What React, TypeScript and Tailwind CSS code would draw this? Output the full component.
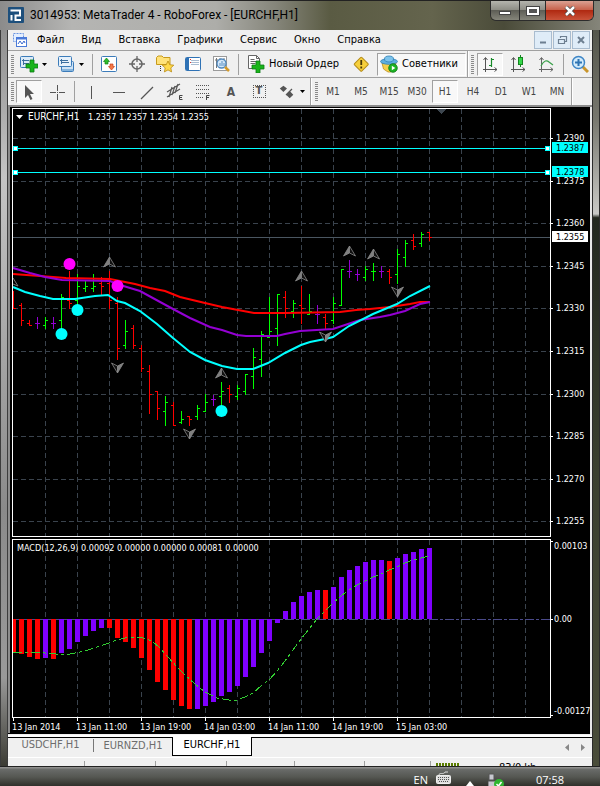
import { ReactNode } from "react";

// [high, low, open, close] in plot units, one bar every 8 units
const bars: [number, number, number, number, string][] = [
  [291, 309, 308, 308, "r"], [303, 326, 305, 320, "r"], [320, 326, 323, 325, "r"],
  [317, 329, 323, 323, "p"], [317, 329, 325, 320, "g"], [317, 329, 323, 323, "p"],
  [294, 329, 320, 297, "g"], [271, 309, 300, 303, "r"], [274, 305, 300, 286, "g"],
  [280, 292, 288, 286, "g"], [274, 292, 288, 286, "g"], [277, 295, 283, 286, "r"],
  [271, 309, 283, 300, "r"], [297, 360, 303, 348, "r"], [320, 349, 345, 331, "g"],
  [325, 349, 328, 345, "r"], [345, 372, 348, 368, "r"], [365, 414, 371, 394, "r"],
  [391, 420, 391, 408, "r"], [396, 426, 411, 402, "g"], [402, 426, 405, 425, "r"],
  [411, 424, 422, 419, "g"], [416, 426, 416, 419, "r"], [405, 420, 416, 408, "g"],
  [394, 412, 411, 402, "g"], [395, 406, 399, 399, "p"], [382, 406, 396, 391, "g"],
  [385, 403, 388, 394, "r"], [385, 400, 396, 388, "g"], [374, 395, 391, 374, "g"],
  [348, 389, 376, 357, "g"], [331, 377, 359, 334, "g"], [297, 338, 337, 331, "g"],
  [294, 346, 328, 294, "g"], [291, 318, 297, 308, "r"], [300, 318, 311, 303, "g"],
  [286, 324, 305, 308, "r"], [294, 315, 314, 311, "g"], [305, 324, 314, 314, "p"],
  [314, 329, 317, 323, "r"], [297, 324, 320, 303, "g"], [269, 306, 305, 269, "g"],
  [260, 278, 271, 271, "p"], [269, 281, 274, 274, "p"], [266, 281, 277, 269, "g"],
  [263, 281, 271, 271, "g"], [266, 278, 271, 271, "p"], [269, 284, 271, 277, "r"],
  [249, 284, 274, 254, "g"], [240, 267, 257, 243, "g"], [234, 250, 240, 246, "r"],
  [232, 247, 243, 234, "g"], [232, 241, 232, 237, "r"],
];

const barColors: Record<string, string> = { r: "#ff0000", g: "#00ff00", p: "#9400d3" };

const macd = [
  652, 654, 657, 659, 658, 659, 653, 649, 642, 636, 631, 628, 628, 638, 642, 648, 658, 670, 682,
  690, 700, 706, 709, 709, 706, 702, 696, 692, 686, 677, 667, 653, 641, 623, 611, 602, 596, 592,
  590, 590, 587, 577, 570, 566, 562, 560, 560, 561, 558, 554, 552, 549, 548,
];
const macdRed = [0, 1, 2, 3, 5, 12, 13, 14, 15, 16, 17, 18, 19, 20, 21, 22, 39, 47];

const redLine =
  "13,274 40,276 66,278 110,279 120,281 135,284 150,288 165,291 180,297 205,303 222,307 238,310 254,313 285,313 340,312 356,310 370,309 390,307 410,304 420,302 430,302";
const purpleLine =
  "13,268 30,273 45,277 62,280 110,281 117,284 130,288 140,291 173,309 190,318 210,327 222,330 237,335 246,336 277,336 285,334 300,331 333,329 345,325 360,320 380,317 390,315 405,311 420,304 430,302";
const cyanLine =
  "13,287 25,292 40,296 53,299 75,299 95,296 108,295 117,301 125,303 140,311 157,324 173,338 190,352 205,360 222,366 237,369 253,369 268,363 285,353 293,349 301,345 310,342 325,339 333,337 349,326 373,314 385,309 397,304 410,296 430,286";
const signalLine =
  "13,652 29,652 45,653 56,654 70,654 85,651 100,646 109,643 117,640 125,638 140,637 152,641 160,648 168,657 177,667 185,675 195,684 205,692 217,698 229,700 237,700 245,697 253,693 261,686 269,680 277,671 285,661 293,650 301,639 309,629 317,619 325,611 333,603 341,596 349,590 357,585 365,581 373,577 381,574 389,570 397,567 405,563 413,560 421,558 429,556";

const gridX = Array.from({ length: 16 }, (_, i) => 45 + i * 32);
const prices: [number, string][] = [
  [138, "1.2390"], [181, "1.2375"], [223, "1.2360"], [266, "1.2345"], [308, "1.2330"],
  [351, "1.2315"], [394, "1.2300"], [436, "1.2285"], [479, "1.2270"], [521, "1.2255"],
];
const dates: [number, string][] = [
  [13, "13 Jan 2014"], [77, "13 Jan 11:00"], [141, "13 Jan 19:00"], [205, "14 Jan 03:00"],
  [269, "14 Jan 11:00"], [333, "14 Jan 19:00"], [397, "15 Jan 03:00"],
];
const upFractals = [[109, 262], [221, 373], [301, 276], [349, 251], [373, 254]];
const downFractals = [[117, 368], [189, 434], [325, 337], [397, 292]];
const dots: [number, number, string][] = [
  [69, 264, "#ff00ff"], [117, 286, "#ff00ff"], [77, 310, "#00ffff"], [61, 334, "#00ffff"], [221, 411, "#00ffff"],
];

function PriceTag({ y, text, fill }: { y: number; text: string; fill: string }) {
  return (
    <>
      <rect x="552" y={y - 6} width="36" height="11" fill={fill} />
      <text x="556" y={y + 3} fill="#000">{text}</text>
    </>
  );
}

function Chart() {
  return (
    <svg
      viewBox="8 105 584 630"
      className="block w-full bg-black font-['DejaVu_Sans_Condensed','DejaVu_Sans',sans-serif] text-[9px]"
      role="img"
      aria-label="EURCHF,H1"
    >
      <g shapeRendering="crispEdges">
        <path d="M8 105h584v2H10v626H8z" fill="#8c8c8c" />
        <rect x="590" y="107" width="2" height="628" fill="#e8e8e8" />
        <rect x="8" y="734" width="584" height="1" fill="#f0f0f0" />
        <g stroke="#3a434d" strokeWidth="1" strokeDasharray="5 3">
          {gridX.map((x) => (
            <path key={x} d={`M${x + 0.5} 109V536M${x + 0.5} 540V717`} />
          ))}
          {prices.map(([y]) => (
            <path key={y} d={`M13 ${y + 0.5}H550`} />
          ))}
        </g>
        <path d="M13 237.5H550" stroke="#4a5661" />
        <path d="M13 619.5H550" stroke="#4a4a8a" strokeDasharray="9 2 3 2" />
        <path d="M436 109h11l-5.5 5z" fill="#3d464f" />

        {bars.map(([high, low, open, close, kind], i) => {
          const x = 13 + i * 8;
          const openTick = i > 0 ? `M${x - 2} ${open + 0.5}h2` : "";
          return (
            <path
              key={i}
              d={`M${x + 0.5} ${high}V${low}${openTick}M${x + 1} ${close + 0.5}h2`}
              stroke={barColors[kind]}
              strokeWidth="1"
            />
          );
        })}

        {macd.map((y, i) => (
          <rect
            key={i}
            x={i ? 11 + i * 8 : 13}
            y={Math.min(y, 619)}
            width={i ? 5 : 3}
            height={Math.abs(y - 619)}
            fill={macdRed.includes(i) ? "#ff0000" : "#8000ff"}
          />
        ))}
        <polyline points={signalLine} fill="none" stroke="#32cd32" strokeDasharray="9 3 3 3" />
      </g>

      <g fill="none" strokeWidth="2">
        <polyline points={redLine} stroke="#ff0000" />
        <polyline points={purpleLine} stroke="#9400d3" />
        <polyline points={cyanLine} stroke="#00ffff" />
      </g>

      {upFractals.map(([x, y]) => (
        <g key={x} transform={`translate(${x} ${y})`} stroke="#8a8a8a" strokeWidth="0.8">
          <path d="M0.5-5L-5.5 5L0.5 2z" fill="#808080" />
          <path d="M0.5-5L6.5 5L0.5 2z" fill="#111" />
        </g>
      ))}
      {downFractals.map(([x, y]) => (
        <g key={x} transform={`translate(${x} ${y})`} stroke="#8a8a8a" strokeWidth="0.8">
          <path d="M0.5 5L-5.5-5L0.5-2z" fill="#111" />
          <path d="M0.5 5L6.5-5L0.5-2z" fill="#808080" />
        </g>
      ))}
      <path d="M13 278l5 8-5-2" fill="none" stroke="#777" />
      {dots.map(([x, y, fill]) => (
        <circle key={`${x}-${y}`} cx={x + 0.5} cy={y} r="6" fill={fill} />
      ))}

      <g shapeRendering="crispEdges">
        {[148, 172].map((y) => (
          <g key={y}>
            <path d={`M13 ${y + 0.5}H550`} stroke="#00ffff" />
            <rect x="13.5" y={y - 1.5} width="4" height="4" fill="#fff" stroke="#00ffff" />
            <rect x="545.5" y={y - 1.5} width="4" height="4" fill="#fff" stroke="#00ffff" />
          </g>
        ))}
        <rect x="12.5" y="108.5" width="538" height="428" fill="none" stroke="#fff" />
        <rect x="12.5" y="539.5" width="538" height="178" fill="none" stroke="#fff" />
        {prices.map(([y]) => (
          <rect key={y} x="551" y={y} width="2" height="1" fill="#fff" />
        ))}
        {[541, 619, 715].map((y) => (
          <rect key={y} x="551" y={y} width="2" height="1" fill="#fff" />
        ))}
        {dates.map(([x]) => (
          <rect key={x} x={x} y="718" width="1" height="3" fill="#fff" />
        ))}
      </g>

      <path d="M16 115h7l-3.500 4z" fill="#fff" />
      <g fill="#fff">
        <text x="28" y="120" className="text-[10px]">EURCHF,H1</text>
        <text x="88" y="120">1.2357 1.2357 1.2354 1.2355</text>
        <text x="17" y="551">MACD(12,26,9) 0.00092 0.00000 0.00000 0.00081 0.00000</text>
        {prices.map(([y, label]) => (
          <text key={y} x="556" y={y + 3}>{label}</text>
        ))}
        <text x="554" y="549">0.00103</text>
        <text x="554" y="622">0.00</text>
        <text x="554" y="714">-0.00127</text>
        {dates.map(([x, label]) => (
          <text key={x} x={x - 1} y="730">{label}</text>
        ))}
      </g>
      <PriceTag y={148} text="1.2387" fill="#00ffff" />
      <PriceTag y={172} text="1.2378" fill="#00ffff" />
      <PriceTag y={237} text="1.2355" fill="#ffffff" />
    </svg>
  );
}

function Grip() {
  return <div className="h-[19px] w-[3px] shrink-0 bg-[repeating-linear-gradient(#8a8a8a_0_1px,#f0f0f0_1px_2px)]" />;
}

function Separator() {
  return (
    <div className="flex h-[21px] w-1.5 shrink-0 justify-center">
      <div className="w-px bg-[#a0a0a0]" />
    </div>
  );
}

function Edge() {
  return <div className="w-0.5 shrink-0 self-stretch border-l border-[#a0a0a0] bg-white" />;
}

function Caret() {
  return (
    <svg width="5" height="3" viewBox="0 0 5 3" className="shrink-0">
      <path d="M0 0h5L2.500 3z" fill="#000" />
    </svg>
  );
}

function ToolButton({ label, pressed, children }: { label: string; pressed?: boolean; children: ReactNode }) {
  return (
    <button
      aria-label={label}
      className={
        pressed
          ? "mx-px flex h-[23px] w-[26px] shrink-0 items-center justify-center border border-white border-t-[#a0a0a0] border-l-[#a0a0a0] bg-[#f8f8f8]"
          : "flex h-[23px] w-7 shrink-0 items-center justify-center"
      }
    >
      {children}
    </button>
  );
}

function Icon({ children }: { children: ReactNode }) {
  return (
    <svg width="18" height="18" viewBox="0 0 18 18" fill="none" className="shrink-0">
      {children}
    </svg>
  );
}

const plus = <path d="M9 6h4v4h4v4h-4v4H9v-4H5v-4h4z" fill="#19b419" stroke="#0a7a14" strokeWidth="0.8" />;
const axes = "M4.500 3v14M2 14.500h14M4.500 2.500L2.500 5M4.500 2.500L6.500 5M16 14.500L13.500 12.500M16 14.500L13.500 16.500";

function StandardToolbar() {
  return (
    <div className="flex h-[27px] items-center overflow-hidden border-b border-[#a0a0a0] bg-[#f0f0f0] pl-[3px] text-[11px]">
      <Grip />
      <button aria-label="Новый график" className="ml-px flex h-[23px] w-[37px] shrink-0 items-center justify-center gap-1">
        <Icon>
          <rect x="0.5" y="1.500" width="13" height="11" rx="1" fill="#dcebf8" stroke="#3c7cba" />
          <path d="M3.500 4v6M2 5.500h7M3 8.500h6" stroke="#3c6f9f" />
          <g transform="translate(1 -1)">{plus}</g>
        </Icon>
        <Caret />
      </button>
      <button aria-label="Профили" className="flex h-[23px] w-[37px] shrink-0 items-center justify-center gap-1">
        <Icon>
          <rect x="4.500" y="6.500" width="12" height="10" rx="1" fill="#cfe3f5" stroke="#3c7cba" />
          <path d="M5 15h11" stroke="#86b5dd" strokeWidth="2" />
          <rect x="1.500" y="1.500" width="13" height="10" rx="1" fill="#e6f1fb" stroke="#3c7cba" />
          <path d="M4.500 4v5M3 5.500h8M4 7.500h8" stroke="#3c6f9f" />
        </Icon>
        <Caret />
      </button>
      <Separator />
      <ToolButton label="Обзор рынка">
        <Icon>
          <rect x="1.500" y="1.500" width="15" height="15" rx="1" fill="#fff" stroke="#3c7cba" />
          <path d="M6.500 3l3 3.500H8V9H5V6.500H3.500z" fill="#2ebd2e" stroke="#148214" strokeWidth="0.700" />
          <path d="M11.500 15l3-3.500H13V9h-3v2.500H8.500z" fill="#f37a48" stroke="#c8401c" strokeWidth="0.700" />
        </Icon>
      </ToolButton>
      <ToolButton label="Окно данных">
        <Icon>
          <circle cx="9" cy="9" r="5" stroke="#666" strokeWidth="1.500" />
          <path d="M9 1v6M9 11v6M1 9h6M11 9h6" stroke="#666" strokeWidth="1.300" />
        </Icon>
      </ToolButton>
      <ToolButton label="Навигатор">
        <Icon>
          <path d="M0.500 9.500V2.500L2 1h4l1.500 1.500H14v7z" fill="#ffe27a" stroke="#c79a1c" />
          <path d="M4.500 11v6" stroke="#333" strokeDasharray="1 1" />
          <path d="M12 6l1.800 3.700 4 .5-3 2.700.8 4-3.600-2-3.600 2 .8-4-3-2.700 4-.5z" fill="#ffd94a" stroke="#b98a12" strokeWidth="0.800" />
        </Icon>
      </ToolButton>
      <ToolButton label="Терминал">
        <Icon>
          <rect x="1.500" y="2.500" width="15" height="13" rx="1" fill="#fff" stroke="#2f72b5" />
          <rect x="2" y="3" width="3" height="12" fill="#2f72b5" />
          <path d="M7 5.500h8M7 7.500h8M7 9.500h8" stroke="#a9bdd2" />
          <path d="M6 4.500h1M6 7.500h1" stroke="#d33" />
        </Icon>
      </ToolButton>
      <ToolButton label="Тестер стратегий">
        <Icon>
          <rect x="1.500" y="1.500" width="13" height="14" fill="#fff" stroke="#9a9a9a" />
          <path d="M3 5h3M4.500 3v10M8 3v3M12 3v4" stroke="#777" />
          <circle cx="9.500" cy="8.500" r="4.500" fill="#cfe6fa" fillOpacity="0.900" stroke="#4e87bd" strokeWidth="1.300" />
          <path d="M8 11V8M10 11V6M12 11V8" stroke="#5a8fc0" />
          <path d="M13 12l4 4" stroke="#d49a2a" strokeWidth="2.500" />
        </Icon>
      </ToolButton>
      <Separator />
      <button className="flex h-[23px] w-[106px] shrink-0 items-center gap-1 pl-1.5 whitespace-nowrap">
        <Icon>
          <path d="M1.500 0.500h8l3 3v10h-11z" fill="#fff" stroke="#666" />
          <path d="M9.500 0.500v3h3M3.500 4.500h4M3.500 6.500h7M3.500 8.500h5" stroke="#666" />
          {plus}
        </Icon>
        Новый Ордер
      </button>
      <ToolButton label="Предупреждение">
        <Icon>
          <rect x="4" y="4" width="10.500" height="10.500" rx="1" transform="rotate(45 9.250 9.250)" fill="#f6cf3c" stroke="#b58d1c" />
          <path d="M9.250 5v5M9.250 11.500v2" stroke="#4a3a08" strokeWidth="1.800" />
        </Icon>
      </ToolButton>
      <button className="ml-0.5 flex h-[23px] w-[89px] shrink-0 items-center gap-1 border border-white border-t-[#a0a0a0] border-l-[#a0a0a0] bg-[#f8f8f8] pl-0.5 whitespace-nowrap">
        <Icon>
          <path d="M2 8l1.500 6L8 17h3l4-4 1-5z" fill="#f6cf4a" stroke="#bb8f1e" strokeWidth="0.800" />
          <ellipse cx="9" cy="6.500" rx="8.500" ry="2.800" fill="#5fb0e0" stroke="#2d7fb4" strokeWidth="0.800" />
          <ellipse cx="9" cy="4" rx="4.500" ry="3" fill="#7cc3ec" stroke="#2d7fb4" strokeWidth="0.800" />
          <circle cx="13" cy="13" r="4.300" fill="#1db324" stroke="#0d7a14" strokeWidth="0.800" />
          <path d="M11.800 10.800v4.400l3.500-2.200z" fill="#fff" />
        </Icon>
        Советники
      </button>
      <div className="ml-px flex self-stretch">
        <Edge />
      </div>
      <div className="ml-0.5 flex items-center">
        <Grip />
      </div>
      <div className="ml-0.5 flex items-center">
        <ToolButton label="Бары" pressed>
          <Icon>
            <path d={axes} stroke="#555" />
            <path d="M10.500 3v9M8 10.500h2M11 4.500h2" stroke="#188a2a" strokeWidth="1.200" />
          </Icon>
        </ToolButton>
        <ToolButton label="Свечи">
          <Icon>
            <path d={axes} stroke="#555" />
            <path d="M11.500 0v12" stroke="#14851f" />
            <rect x="9.500" y="2.500" width="4" height="7" fill="#35d84a" stroke="#14851f" />
          </Icon>
        </ToolButton>
        <ToolButton label="Линия">
          <Icon>
            <path d={axes} stroke="#666" />
            <path d="M4 11c3-6 6-6 8-4l4 3" stroke="#3aa04a" strokeWidth="1.200" />
          </Icon>
        </ToolButton>
      </div>
      <Separator />
      <ToolButton label="Увеличить">
        <Icon>
          <path d="M11 11l6 6" stroke="#c9952b" strokeWidth="3" />
          <circle cx="7.500" cy="7.500" r="6" fill="#d3ebfb" stroke="#3f86c6" strokeWidth="1.500" />
          <path d="M7.500 4v7M4 7.500h7" stroke="#2f74b3" strokeWidth="2" />
        </Icon>
      </ToolButton>
    </div>
  );
}

function DrawingToolbar() {
  return (
    <div className="flex h-[27px] items-center overflow-hidden bg-[#f0f0f0] pl-[3px] text-[10px] text-[#444]">
      <Grip />
      <div className="w-px" />
      <ToolButton label="Курсор" pressed>
        <Icon>
          <path d="M5 2v13l3-3 2.500 5 2-1L10 11h4z" fill="#555" />
        </Icon>
      </ToolButton>
      <ToolButton label="Перекрестие">
        <Icon>
          <path d="M9.500 2v6M9.500 11v6M2 9.500h6M11 9.500h6M9 9.500h1" stroke="#555" />
        </Icon>
      </ToolButton>
      <Separator />
      <ToolButton label="Вертикальная линия">
        <Icon>
          <path d="M9.500 3v13" stroke="#555" />
        </Icon>
      </ToolButton>
      <ToolButton label="Горизонтальная линия">
        <Icon>
          <path d="M3 9.500h12" stroke="#555" />
        </Icon>
      </ToolButton>
      <ToolButton label="Трендовая линия">
        <Icon>
          <path d="M3 16L15 4" stroke="#555" strokeWidth="1.200" />
        </Icon>
      </ToolButton>
      <ToolButton label="Канал">
        <Icon>
          <path d="M1 9L14 1M1 14L14 6M3 14L6 4M6 12L9 3M9 10L12 1" stroke="#555" strokeWidth="1.200" />
          <path d="M16.500 12.500h-3v4h3M13.500 14.500h2.500" stroke="#444" />
        </Icon>
      </ToolButton>
      <ToolButton label="Фибоначчи">
        <Icon>
          <path d="M2 2.500h14M2 6.500h14M2 10.500h14M2 14.500h8" stroke="#555" strokeDasharray="1 1" />
          <path d="M15.500 12.500h-3V17M12.500 14.500h2.500" stroke="#444" />
        </Icon>
      </ToolButton>
      <ToolButton label="Текст">
        <span className="text-xs font-bold text-[#555]">A</span>
      </ToolButton>
      <ToolButton label="Метка">
        <span className="flex size-[13px] items-center justify-center border border-dotted border-[#555] text-[11px] font-bold text-[#555]">
          T
        </span>
      </ToolButton>
      <button aria-label="Стрелки" className="flex h-[23px] w-9 shrink-0 items-center justify-center gap-1">
        <Icon>
          <path d="M6 3l4 3-4 4-4-4zM13 9l4 4-4 4-4-4z" fill="#555" transform="scale(.9)" />
          <path d="M8 12l6-6" stroke="#555" strokeWidth="1.200" />
        </Icon>
        <Caret />
      </button>
      <div className="ml-px flex self-stretch">
        <Edge />
      </div>
      <div className="ml-[3px] flex items-center">
        <Grip />
      </div>
      <div className="ml-px flex items-center">
        {["M1", "M5", "M15", "M30", "H1", "H4", "D1", "W1", "MN"].map((tf) => (
          <ToolButton key={tf} label={tf} pressed={tf === "H1"}>
            {tf}
          </ToolButton>
        ))}
      </div>
      <Edge />
    </div>
  );
}

function TitleBar() {
  return (
    <header className="flex h-[30px] items-start border-t border-[#222] bg-[linear-gradient(90deg,#8b8b8b,#b5b5b3_12%,#adada9_36%,#85857a_46%,#5a5b43_55%,#64644d_72%,#4a4b39_84%,#85857a)] pl-2">
      <svg width="16" height="16" viewBox="0 0 16 16" className="mt-1.5 shrink-0">
        <rect width="16" height="16" rx="1" fill="#1d4f7c" />
        <path d="M3.500 13.500V8M2.500 3.500H12v5H7.500V13H13" fill="none" stroke="#fff" strokeWidth="2" />
      </svg>
      <h1 className="mt-1 ml-1.5 grow font-[Roboto,sans-serif] text-xs leading-[20px] whitespace-nowrap text-black">
        3014953: MetaTrader 4 - RoboForex - [EURCHF,H1]
      </h1>
      <div className="mr-1.5 flex h-5 overflow-hidden rounded-b-md border border-t-0 border-[#2c2c2c] text-white">
        <button aria-label="Свернуть" className="flex w-7 items-center justify-center bg-[linear-gradient(#b4b4ad,#8c8c84_48%,#5e5e56_50%,#85857a)]">
          <span className="mt-1 h-1 w-3 border border-[#444] bg-white" />
        </button>
        <button aria-label="Развернуть" className="flex w-[27px] items-center justify-center border-x border-[#2c2c2c] bg-[linear-gradient(#b4b4ad,#8c8c84_48%,#5e5e56_50%,#85857a)]">
          <span className="h-2 w-3 border-2 border-white bg-[#555] outline outline-[#444]" />
        </button>
        <button aria-label="Закрыть" className="flex w-[47px] items-center justify-center bg-[linear-gradient(#dba193,#c8624c_46%,#b02a12_50%,#c9533a)]">
          <svg width="12" height="10" viewBox="0 0 12 10">
            <path d="M2 1l8 8M10 1L2 9" stroke="#444" strokeWidth="4" />
            <path d="M2 1l8 8M10 1L2 9" stroke="#fff" strokeWidth="2.500" />
          </svg>
        </button>
      </div>
    </header>
  );
}

function MenuBar() {
  return (
    <nav className="flex h-[21px] items-center border-b border-[#a0a0a0] bg-[#f0f0f0] pl-1 text-[11px] text-black">
      <svg width="16" height="16" viewBox="0 0 16 16" fill="none" className="mr-[9px] shrink-0">
        <rect x="1.500" y="1.500" width="10" height="8" fill="#e4efff" stroke="#6a94e0" strokeDasharray="2 1" />
        <rect x="4.500" y="5.500" width="10" height="9" fill="#fff" stroke="#4a7ad8" />
        <path d="M4.500 6.500h10" stroke="#4a7ad8" strokeWidth="2" />
        <path d="M6 12l2-3 2 3 2-3 1 2" stroke="#3a6ad0" />
      </svg>
      <div className="flex grow gap-[17px]">
        {["Файл", "Вид", "Вставка", "Графики", "Сервис", "Окно", "Справка"].map((item) => (
          <button key={item}>{item}</button>
        ))}
      </div>
      <div className="mr-0.5 flex gap-px">
        {["M5 10.500h6", "M6.500 6V4.500h6v5H11M4.500 7.500h6v4h-6z", "M5 5l6 6M11 5l-6 6"].map((d, i) => (
          <button
            key={d}
            aria-label={["Свернуть окно", "Восстановить окно", "Закрыть окно"][i]}
            className="flex size-[18px] items-center justify-center border border-[#a9bccf] bg-[#dfecf8]"
          >
            <svg width="16" height="16" viewBox="0 0 16 16" fill="none">
              <path d={d} stroke="#6d7f91" strokeWidth={i === 1 ? 1.2 : 2} />
            </svg>
          </button>
        ))}
      </div>
    </nav>
  );
}

function ChartTabs() {
  return (
    <div className="flex h-[22px] border-t-2 border-white bg-[#f0f0f0] text-[11px] text-[#6d6d6d]">
      <button className="flex w-[85px] items-center justify-center border-t border-black pb-1">USDCHF,H1</button>
      <button className="flex w-[79px] items-center border-t border-black pb-1">
        <span className="grow border-l border-[#777] text-center leading-[13px]">EURNZD,H1</span>
      </button>
      <button className="flex h-[19px] w-20 items-center justify-center border border-t-0 border-black bg-white pb-px text-black">
        EURCHF,H1
      </button>
      <div className="flex grow items-center justify-end gap-3 border-t border-black pr-[7px]">
        <button aria-label="Назад">
          <svg width="4" height="7" viewBox="0 0 4 7">
            <path d="M4 0v7L0 3.500z" fill="#888" />
          </svg>
        </button>
        <button aria-label="Вперёд">
          <svg width="4" height="7" viewBox="0 0 4 7">
            <path d="M0 0v7l4-3.500z" fill="#888" />
          </svg>
        </button>
      </div>
    </div>
  );
}

function StatusBar() {
  return (
    <div className="flex h-[9px] items-start overflow-hidden border-t border-white bg-[#f0f0f0] text-[11px] text-black">
      {["w-[77px]", "w-[71px]", "w-[71px]", "w-[68px]", "w-[70px]", "w-[66px]"].map((w, i) => (
        <div key={i} className={`${w} mt-[3px] h-[6px] shrink-0 border-r border-[#a0a0a0]`} />
      ))}
      <div className="mt-[5px] ml-[5px] h-1 w-[23px] shrink-0 bg-[repeating-linear-gradient(90deg,#5a7d00_0_2px,#f0f0f0_2px_3px)]" />
      <span className="mt-[3px] ml-10 leading-[14px]">83/0 kb</span>
    </div>
  );
}

function Taskbar() {
  return (
    <footer className="flex min-h-5 grow items-start justify-end overflow-hidden border-t border-[#222] bg-[linear-gradient(#8e8e8c_0_1px,#6a6c6a_2px,#555752_10px,#2c2c26)] pr-9 font-['Open_Sans','Noto_Sans',sans-serif] text-[11px] text-white">
      <span className="mt-1.5 leading-[13px]">EN</span>
      <svg width="16" height="13" viewBox="0 0 16 13" fill="none" className="mt-1 ml-2">
        <path d="M3 4c0-3 5 0 6-3h3" stroke="#ddd" />
        <rect x="0.500" y="4.500" width="14" height="8" rx="1" fill="#ddd" stroke="#eee" />
        <path d="M2 6.500h11M2 8.500h11M3 10.500h9" stroke="#555" strokeDasharray="1 1" />
      </svg>
      <svg width="8" height="5" viewBox="0 0 8 5" className="mt-3.5 ml-3.5">
        <path d="M0 5l4-5 4 5z" fill="#fff" />
      </svg>
      <svg width="16" height="14" viewBox="0 0 16 14" className="mt-1.5 ml-3.5">
        <path d="M1 1h5v6H1zM0 8h8v6H0z" fill="#c8c8d0" stroke="#555" />
        <circle cx="11" cy="11" r="5" fill="#2fb52f" />
        <path d="M8.500 11l2 2 3-4" fill="none" stroke="#fff" strokeWidth="1.500" />
      </svg>
      <time className="mt-1.5 ml-8 leading-[13px]">07:58</time>
    </footer>
  );
}

export default function App() {
  return (
    <div className="flex min-h-screen flex-col bg-[#3a3b36] font-['DejaVu_Sans_Condensed','DejaVu_Sans',sans-serif]">
      <TitleBar />
      <div className="flex">
        <div className="w-2 shrink-0 border-x border-[#3c3c3c] bg-[linear-gradient(#8f8f8f,#c4c4c4_20%,#8a8a8a_65%,#999_88%,#3c3c34)]" />
        <main className="min-w-0 grow">
          <MenuBar />
          <StandardToolbar />
          <DrawingToolbar />
          <Chart />
          <ChartTabs />
          <StatusBar />
        </main>
        <div className="w-2 shrink-0 border-x border-[#2c2c2c] bg-[linear-gradient(#55564c,#77776e_12%,#c9c9c6_25%,#23281f_25.5%,#3b4030_60%,#4a4d3a)]" />
      </div>
      <Taskbar />
    </div>
  );
}
